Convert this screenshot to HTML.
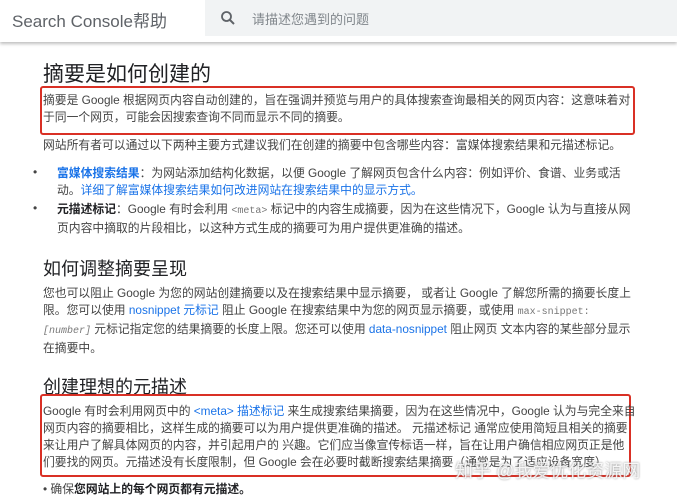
<!DOCTYPE html>
<html><head><meta charset="utf-8"><style>
body{margin:0;width:677px;height:500px;overflow:hidden;background:#fff;font-family:"Liberation Sans","Noto Sans CJK SC",sans-serif;color:#444;position:relative}
.hdr{position:absolute;left:0;top:0;width:677px;height:42px;background:#fff;box-shadow:0 2px 3px rgba(0,0,0,.25)}
.logo{position:absolute;left:12px;top:7px;font-size:17px;color:#5f6368}
.sb{position:absolute;left:205px;top:0;width:472px;height:36px;background:#f1f3f4}
.sb .ph{position:absolute;left:47px;top:9px;font-size:13px;color:#80868b}
.t{position:absolute;left:43px;font-size:11.8px;line-height:17px;white-space:nowrap}
.h{position:absolute;left:43px;white-space:nowrap;color:#202124}
.box{position:absolute;border:2px solid #d93025;border-radius:3px}
a{color:#1a73e8;text-decoration:none}
code{font-family:"Liberation Mono",monospace;font-size:10px;color:#777}
.b{position:absolute;left:33px;font-size:12px}
</style></head><body>
<div class="hdr"><div class="logo">Search Console帮助</div>
<div class="sb"><svg style="position:absolute;left:14px;top:9px" width="18" height="18" viewBox="0 0 24 24"><circle cx="10" cy="10" r="6" fill="none" stroke="#5f6368" stroke-width="2.4"/><path d="M14.5 14.5L20 20" stroke="#5f6368" stroke-width="2.6"/></svg><div class="ph">请描述您遇到的问题</div></div></div>
<div class="h" style="top:58px;font-size:21px">摘要是如何创建的</div>
<div class="box" style="left:40px;top:86px;width:591px;height:45px"></div>
<div class="t" style="top:92px">摘要是 Google 根据网页内容自动创建的，旨在强调并预览与用户的具体搜索查询最相关的网页内容：这意味着对<br>于同一个网页，可能会因搜索查询不同而显示不同的摘要。</div>
<div class="t" style="top:137px">网站所有者可以通过以下两种主要方式建议我们在创建的摘要中包含哪些内容：富媒体搜索结果和元描述标记。</div>
<div class="b" style="top:165px">•</div>
<div class="t" style="left:57px;top:165px"><a style="font-weight:bold" >富媒体搜索结果</a>：为网站添加结构化数据，以便 Google 了解网页包含什么内容：例如评价、食谱、业务或活<br>动。<a>详细了解富媒体搜索结果如何改进网站在搜索结果中的显示方式。</a></div>
<div class="b" style="top:201px">•</div>
<div class="t" style="left:57px;top:201px"><b style="color:#202124">元描述标记</b>：Google 有时会利用 <code>&lt;meta&gt;</code> 标记中的内容生成摘要，因为在这些情况下，Google 认为与直接从网<br>页内容中摘取的片段相比，以这种方式生成的摘要可为用户提供更准确的描述。</div>
<div class="h" style="top:255px;font-size:18px">如何调整摘要呈现</div>
<div class="t" style="top:285px">您也可以阻止 Google 为您的网站创建摘要以及在搜索结果中显示摘要， 或者让 Google 了解您所需的摘要长度上<br>限。您可以使用 <a>nosnippet 元标记</a> 阻止 Google 在搜索结果中为您的网页显示摘要，或使用 <code>max-snippet:</code><br><code><i>[number]</i></code> 元标记指定您的结果摘要的长度上限。您还可以使用 <a>data-nosnippet</a> 阻止网页 文本内容的某些部分显示<br>在摘要中。</div>
<div class="h" style="top:373px;font-size:18px">创建理想的元描述</div>
<div class="box" style="left:40px;top:394px;width:587px;height:79px"></div>
<div class="t" style="top:403px">Google 有时会利用网页中的 <a>&lt;meta&gt; 描述标记</a> 来生成搜索结果摘要，因为在这些情况中，Google 认为与完全来自<br>网页内容的摘要相比，这样生成的摘要可以为用户提供更准确的描述。 元描述标记 通常应使用简短且相关的摘要<br>来让用户了解具体网页的内容，并引起用户的 兴趣。它们应当像宣传标语一样，旨在让用户确信相应网页正是他<br>们要找的网页。元描述没有长度限制，但 Google 会在必要时截断搜索结果摘要（通常是为了适应设备宽度）</div>
<div style="position:absolute;left:455px;top:457px;font-size:18px;color:rgba(255,255,255,.85);text-shadow:0 0 2px #888;white-space:nowrap">知乎 @我爱优化资源网</div>
<div class="t" style="top:481px">• 确保<b style="color:#202124">您网站上的每个网页都有元描述。</b></div>
</body></html>
